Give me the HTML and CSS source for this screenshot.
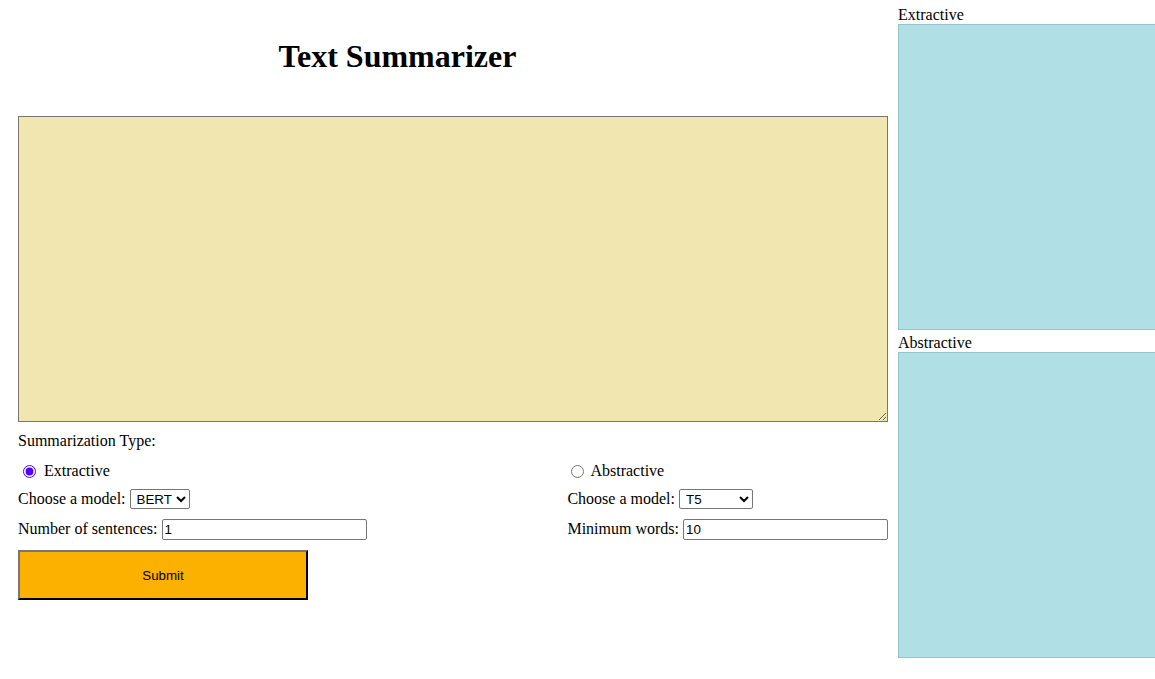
FILE: index.html
```html
<!DOCTYPE html>
<html lang="en">
<head>
<meta charset="utf-8">
<title>Text Summarizer</title>
<link rel="stylesheet" href="styles.css">
</head>
<body>
<div class="page">
  <main class="main">
    <h1 class="title">Text Summarizer</h1>
    <textarea class="input-text"></textarea>
    <div class="type-label">Summarization Type:</div>
    <div class="options">
      <div class="group">
        <div class="row row-radio"><input type="radio" name="type" class="radio radio-first" checked><span>Extractive</span></div>
        <div class="row"><span>Choose a model:</span><select class="select select-bert"><option>BERT</option></select></div>
        <div class="row"><span>Number of sentences:</span><input type="text" class="field" value="1"></div>
      </div>
      <div class="group">
        <div class="row row-radio"><input type="radio" name="type" class="radio"><span>Abstractive</span></div>
        <div class="row"><span>Choose a model:</span><select class="select select-t5"><option>T5</option></select></div>
        <div class="row"><span>Minimum words:</span><input type="text" class="field" value="10"></div>
      </div>
    </div>
    <button class="submit">Submit</button>
  </main>
  <aside class="side">
    <div class="side-label">Extractive</div>
    <div class="output"></div>
    <div class="side-label">Abstractive</div>
    <div class="output"></div>
  </aside>
</div>
</body>
</html>
```
FILE: styles.css
```css
html { overflow: hidden; }
body {
  margin: 0;
  font-family: "Liberation Serif", "Times New Roman", serif;
  font-size: 16px;
  color: #000;
  background: #fff;
}
.page {
  display: flex;
  gap: 10px;
  padding-left: 18px;
  width: 1200px;
}
.main {
  width: 870px;
  display: flex;
  flex-direction: column;
  align-items: flex-start;
}
.title {
  width: 759px;
  margin: 38px 0 0;
  font-size: 32px;
  line-height: 37px;
  text-align: center;
  font-weight: bold;
}
.input-text {
  display: block;
  box-sizing: border-box;
  width: 870px;
  height: 306px;
  margin: 41px 0 0;
  background: #f1e6b0;
  border: 1px solid #767676;
  padding: 2px;
  font-family: "Liberation Mono", monospace;
  font-size: 13px;
}
.type-label {
  margin-top: 10px;
  line-height: 18px;
}
.options {
  margin-top: 9px;
  width: 870px;
  display: flex;
  justify-content: space-between;
}
.group {
  display: flex;
  flex-direction: column;
}
.row {
  height: 24px;
  display: flex;
  align-items: center;
  gap: 4px;
  white-space: pre;
}
.row + .row { margin-top: 6px; }
.row-radio { margin-bottom: -2px; gap: 0; }
.radio {
  width: 13px;
  height: 13px;
  margin: 0 6px 0 4px;
  accent-color: #5100ff;
}
.radio-first { margin: 0 8px 0 5px; }
.select {
  height: 20px;
  box-sizing: border-box;
  font-family: "Liberation Sans", Arial, sans-serif;
  font-size: 13.33px;
  border: 1px solid #767676;
  border-radius: 2px;
  background: #fff;
  color: #000;
  padding: 0 0 0 2px;
}
.select-bert { width: 60px; }
.select-t5 { width: 74px; }
.field {
  box-sizing: border-box;
  width: 205px;
  height: 21px;
  border: 1px solid #767676;
  border-radius: 2px;
  padding: 1px 2px;
  font-family: "Liberation Sans", Arial, sans-serif;
  font-size: 13.33px;
}
.submit {
  margin-top: 9px;
  box-sizing: border-box;
  width: 290px;
  height: 50px;
  background: #fcb000;
  border: 2px outset #767676;
  border-color: #767676 #222 #222 #767676;
  font-family: "Liberation Sans", Arial, sans-serif;
  font-size: 13.33px;
  color: #000;
  padding: 0;
}
.side {
  padding-top: 5px;
  width: 300px;
  display: flex;
  flex-direction: column;
}
.side-label {
  line-height: 19px;
}
.output {
  box-sizing: border-box;
  height: 306px;
  background: #b0e0e6;
  border: 1px solid #98c4ca;
  margin-bottom: 3px;
}
```
